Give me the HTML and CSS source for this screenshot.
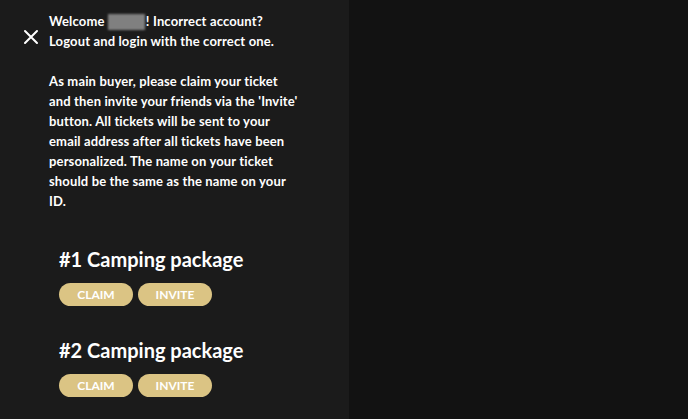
FILE: index.html
```html
<!doctype html>
<html>
 <head>
  <link rel="stylesheet" href="styles.css">
 </head>
 <body>
  <div class="page">
   <!-- Side panel -->
   <aside class="panel">
    <button class="close" aria-label="Close">
     <svg width="16" height="16" viewBox="0 0 16 16"><path d="M2 2L14 14M14 2L2 14" stroke="#fff" stroke-width="2" stroke-linecap="round"/></svg>
    </button>
    <div class="content">
     <p class="intro">Welcome <span class="blurname">Name</span>! Incorrect account?<br>Logout and login with the correct one.</p>
     <p class="intro">As main buyer, please claim your ticket and then invite your friends via the 'Invite' button. All tickets will be sent to your email address after all tickets have been personalized. The name on your ticket should be the same as the name on your ID.</p>

     <div class="ticket">
      <h2>#1 Camping package</h2>
      <div class="actions">
       <button class="pill">CLAIM</button>
       <button class="pill">INVITE</button>
      </div>
     </div>
     <div class="ticket">
      <h2>#2 Camping package</h2>
      <div class="actions">
       <button class="pill">CLAIM</button>
       <button class="pill">INVITE</button>
      </div>
     </div>
    </div>
   </aside>
   <main class="rest"></main>
  </div>
 </body>
</html>
```

FILE: styles.css
```css
html, body {
  margin: 0;
  height: 100%;
}
body {
  background-color: #121212;
  font-family: Lato, sans-serif;
  color: #fff;
  overflow: hidden;
}
.page {
  display: flex;
  height: 100%;
}
/* left panel */
.panel {
  width: 349px;
  flex-shrink: 0;
  background-color: #1b1b1b;
  display: flex;
}
.close {
  background: none;
  border: none;
  padding: 0;
  margin: 29px 0 0 23px;
  width: 16px;
  height: 16px;
  cursor: pointer;
}
.content {
  padding: 11px 0 0 10px;
  flex: 1;
}
.intro {
  margin: 0 0 20px;
  width: 250px;
  font-size: 13px;
  line-height: 20px;
  font-weight: 700;
  letter-spacing: 0.15px;
}
.blurname {
  display: inline-block;
  width: 37px;
  height: 16px;
  vertical-align: -3px;
  background-color: #808080;
  color: transparent;
  filter: blur(1.2px);
  margin-right: 1px;
}
.ticket {
  margin: 36px 0 0 10px;
}
.ticket + .ticket {
  margin-top: 32px;
}
.ticket h2 {
  margin: 0;
  font-size: 20px;
  line-height: 24px;
  font-weight: 700;
}
.actions {
  display: flex;
  gap: 5px;
  margin-top: 12px;
}
.pill {
  background-color: #dbc484;
  color: #fff;
  border: none;
  border-radius: 12px;
  height: 23px;
  width: 74px;
  padding: 0;
  font-family: Lato, sans-serif;
  font-size: 12px;
  font-weight: 700;
  cursor: pointer;
}
.rest {
  flex: 1;
}
```
